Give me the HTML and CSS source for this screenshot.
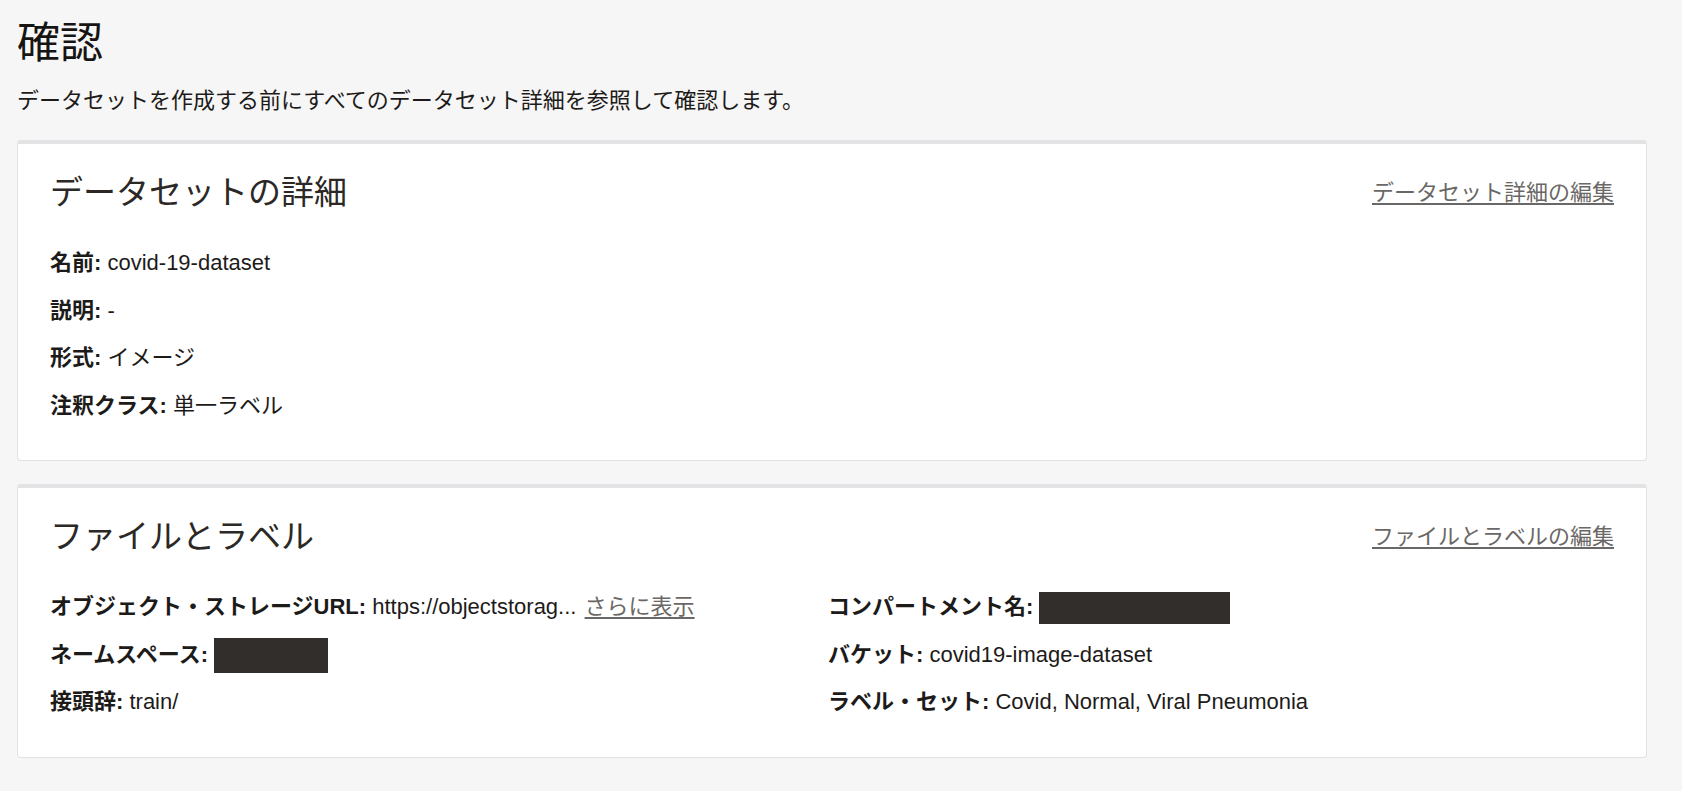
FILE: index.html
```html
<!DOCTYPE html>
<html lang="ja">
<head>
<meta charset="utf-8">
<title>確認</title>
<link rel="stylesheet" href="styles.css">
</head>
<body>
<main class="page">
  <h1 class="page-title">確認</h1>
  <p class="page-desc">データセットを作成する前にすべてのデータセット詳細を参照して確認します。</p>

  <section class="card">
    <div class="card-head">
      <h2 class="card-title">データセットの詳細</h2>
      <a class="edit-link" href="#">データセット詳細の編集</a>
    </div>
    <div class="rows">
      <div class="row"><span class="label">名前:</span> covid-19-dataset</div>
      <div class="row"><span class="label">説明:</span> -</div>
      <div class="row"><span class="label">形式:</span> イメージ</div>
      <div class="row"><span class="label">注釈クラス:</span> 単一ラベル</div>
    </div>
  </section>

  <section class="card">
    <div class="card-head">
      <h2 class="card-title">ファイルとラベル</h2>
      <a class="edit-link" href="#">ファイルとラベルの編集</a>
    </div>
    <div class="cols">
      <div class="rows">
        <div class="row"><span class="label">オブジェクト・ストレージURL:</span> https://objectstorag... <a class="more-link" href="#">さらに表示</a></div>
        <div class="row"><span class="label">ネームスペース:</span> <span class="redact redact-ns"></span></div>
        <div class="row"><span class="label">接頭辞:</span> train/</div>
      </div>
      <div class="rows">
        <div class="row"><span class="label">コンパートメント名:</span> <span class="redact redact-comp"></span></div>
        <div class="row"><span class="label">バケット:</span> covid19-image-dataset</div>
        <div class="row"><span class="label">ラベル・セット:</span> Covid, Normal, Viral Pneumonia</div>
      </div>
    </div>
  </section>
</main>
</body>
</html>
```

FILE: styles.css
```css
html, body {
  margin: 0;
  padding: 0;
  background: #f6f6f6;
}

body {
  font-family: "Liberation Sans", "Noto Sans CJK JP", sans-serif;
  color: #1d1b19;
}

.page {
  padding: 19px 35px 0 17px;
}

.page-title {
  margin: 0;
  font-size: 43px;
  line-height: 48px;
  font-weight: 400;
  color: #161513;
}

.page-desc {
  margin: 19px 0 0;
  font-size: 22px;
  line-height: 30px;
  color: #1d1b19;
}

.card {
  margin-top: 24px;
  background: #ffffff;
  border: 1px solid #e2e2e2;
  border-top: 4px solid #e3e3e6;
  border-radius: 4px;
  padding: 25px 32px 31px;
}

.card + .card {
  margin-top: 23px;
}

.card-head {
  display: flex;
  justify-content: space-between;
  align-items: center;
  height: 48px;
  margin-bottom: 22px;
}

.card-title {
  margin: 0;
  font-size: 33px;
  line-height: 48px;
  font-weight: 400;
  color: #2b2825;
}

.edit-link {
  font-size: 22px;
  line-height: 30px;
  color: #6a6866;
  text-decoration: underline;
  text-underline-offset: 3px;
}

.cols {
  display: grid;
  grid-template-columns: 778px 1fr;
}

.row {
  font-size: 22px;
  line-height: 47.5px;
  height: 47.5px;
  white-space: nowrap;
}

.label {
  font-weight: 700;
}

.more-link {
  color: #6a6866;
  text-decoration: underline;
  text-underline-offset: 3px;
  margin-left: 2px;
}

.redact {
  display: inline-block;
  vertical-align: middle;
  background: #322e2b;
}

.redact-ns {
  width: 114px;
  height: 35px;
}

.redact-comp {
  width: 191px;
  height: 32px;
}
```
